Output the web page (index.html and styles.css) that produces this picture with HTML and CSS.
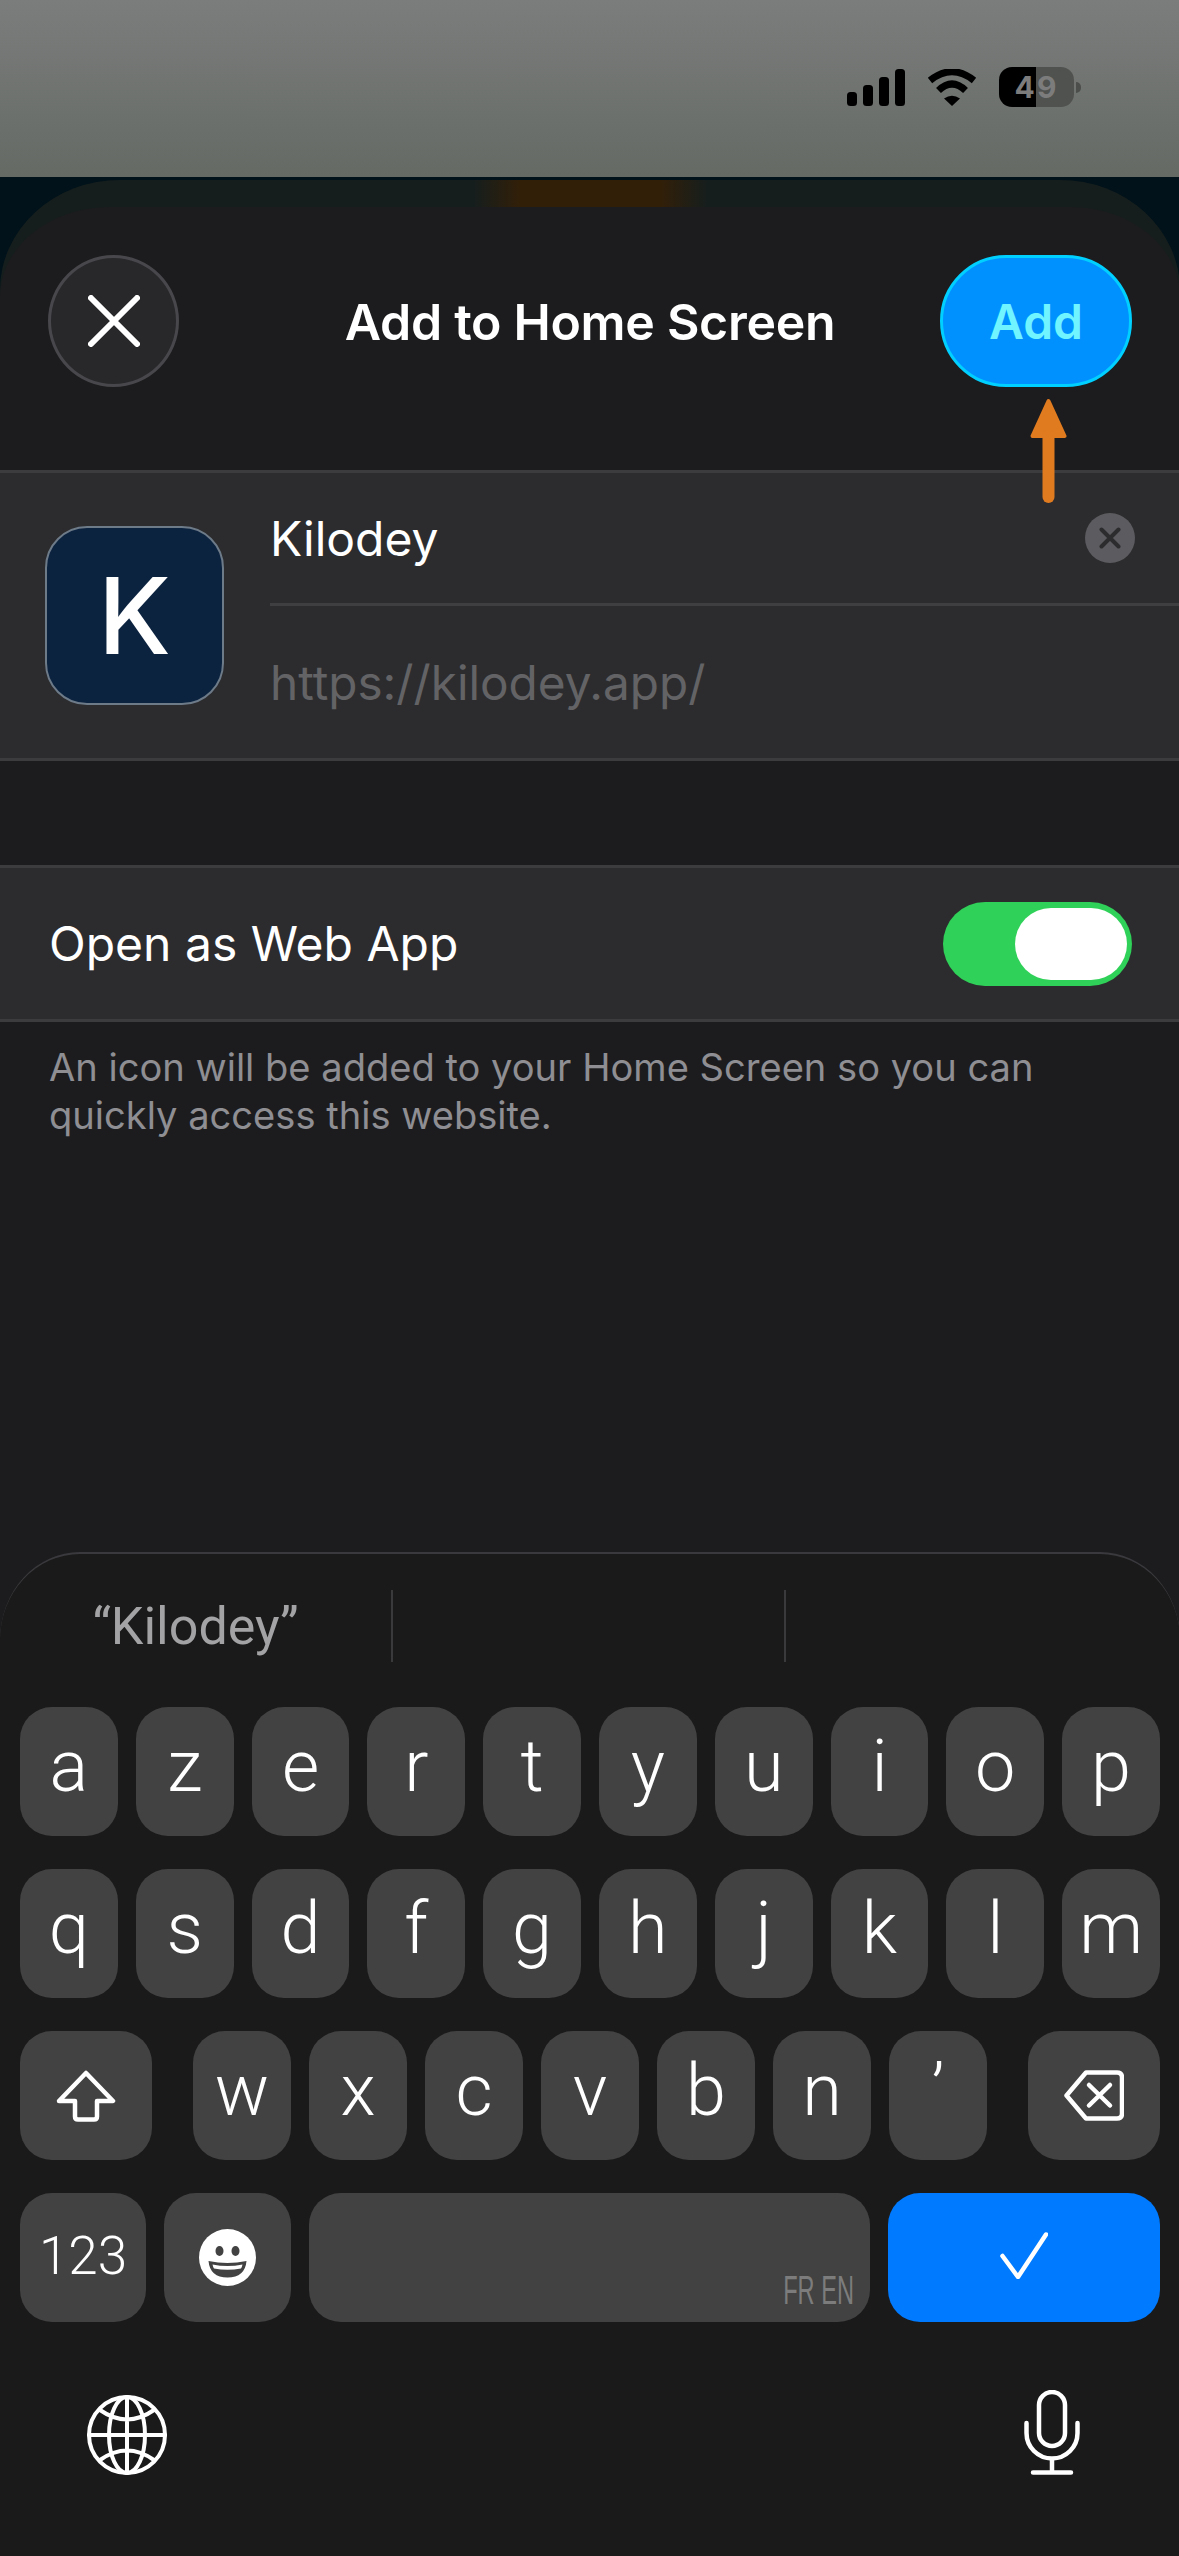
FILE: index.html
```html
<!DOCTYPE html>
<html lang="en">
<head>
<meta charset="utf-8">
<title>Add to Home Screen</title>
<link rel="stylesheet" href="styles.css">
</head>
<body>
<div class="screen">
  <header class="statusbar">
    <svg class="signal" viewBox="0 0 58 37" width="58" height="37"><rect x="0" y="23" width="10" height="14" rx="3.5"/><rect x="16" y="16" width="10" height="21" rx="3.5"/><rect x="32" y="8" width="10" height="29" rx="3.5"/><rect x="48" y="0" width="10" height="37" rx="3.5"/></svg>
    <svg class="wifi" viewBox="0 0 50 37" width="50" height="37"><path class="wifi-arc" d="M3 11.5Q25 -6 47 11.5"/><path class="wifi-arc" d="M11.5 21.5Q25 8.500 38.500 21.500"/><path d="M17 29.500Q25 24 33 29.500L25 37Z"/></svg>
    <div class="battery"><div class="battery-body">49</div><div class="battery-nub"></div></div>
  </header>
  <main class="backdrop">
    <div class="sheet-outer">
      <div class="glow"></div>
      <div class="sheet">
        <div class="nav">
          <button class="close" aria-label="Close"><svg viewBox="0 0 52 52" width="52" height="52"><path d="M3 3L49 49M49 3L3 49"/></svg></button>
          <h1 class="title">Add to Home Screen</h1>
          <button class="add">Add</button>
        </div>
        <section class="group app-row">
          <div class="app-icon">K</div>
          <div class="fields">
            <div class="field name-field"><span class="name">Kilodey</span><span class="clear"><svg viewBox="0 0 22 22" width="22" height="22"><path d="M2.500 2.500L19.500 19.500M19.500 2.500L2.500 19.500"/></svg></span></div>
            <div class="field url-field"><span class="url">https://kilodey.app/</span></div>
          </div>
        </section>
        <section class="group toggle-row">
          <span class="toggle-label">Open as Web App</span>
          <div class="toggle"><div class="knob"></div></div>
        </section>
        <p class="help">An icon will be added to your Home Screen so you can<br>quickly access this website.</p>
        <div class="keyboard">
          <div class="suggestions"><div class="cell">“Kilodey”</div><div class="cell"></div><div class="cell"></div></div>
          <div class="rows">
            <div class="row">
              <div class="key">a</div><div class="key">z</div><div class="key">e</div><div class="key">r</div><div class="key">t</div><div class="key">y</div><div class="key">u</div><div class="key">i</div><div class="key">o</div><div class="key">p</div>
            </div>
            <div class="row">
              <div class="key">q</div><div class="key">s</div><div class="key">d</div><div class="key">f</div><div class="key">g</div><div class="key">h</div><div class="key">j</div><div class="key">k</div><div class="key">l</div><div class="key">m</div>
            </div>
            <div class="row row-three">
              <div class="key side"><svg class="ico" viewBox="0 0 60 52" width="60" height="52"><path d="M30 3L57 31H41V46.500Q41 49.500 38 49.500H22Q19 49.500 19 46.500V31H3Z"/></svg></div>
              <div class="letters">
                <div class="key">w</div><div class="key">x</div><div class="key">c</div><div class="key">v</div><div class="key">b</div><div class="key">n</div><div class="key">’</div>
              </div>
              <div class="key side"><svg class="ico" viewBox="0 0 60 51" width="60" height="51"><path d="M22 2.500H53Q58 2.500 58 7.500V43.500Q58 48.500 53 48.500H22L2.500 25.500Z"/><path d="M25 15L46 35.500M46 15L25 35.500"/></svg></div>
            </div>
            <div class="row row-four">
              <div class="key num">123</div>
              <div class="key emoji"><svg viewBox="0 0 57 57" width="57" height="57"><circle class="face" cx="28.500" cy="28.500" r="28.500"/><ellipse class="feat" cx="20.500" cy="22" rx="4" ry="5"/><ellipse class="feat" cx="36.500" cy="22" rx="4" ry="5"/><path class="feat" d="M9.500 32Q28.500 36 47.500 32Q46 48.500 28.500 48.500Q11 48.500 9.500 32Z"/><path class="face" d="M13.500 35.500Q28.500 38.500 43.500 35.500Q43 38 42 39.500Q28.500 42 15 39.500Q14 38 13.500 35.500Z"/></svg></div>
              <div class="key space"><span class="lang">FR EN</span></div>
              <div class="key return"><svg class="ico" viewBox="0 0 48 47" width="48" height="47"><path d="M2.500 24L18 45L46 2.500"/></svg></div>
            </div>
          </div>
          <div class="bottom">
            <svg class="ico thin" viewBox="0 0 80 80" width="80" height="80"><circle cx="40" cy="40" r="38"/><ellipse cx="40" cy="40" rx="18" ry="38"/><path d="M40 2V78M2 40H78M13 15Q40 34 67 15M13 65Q40 46 67 65"/></svg>
            <svg class="ico" viewBox="0 0 56 85" width="56" height="85"><rect x="15" y="2" width="26" height="54" rx="13"/><path d="M2.500 33V43A25.500 25.500 0 0 0 53.500 43V33M28 69V82M9 82.500H47"/></svg>
          </div>
        </div>
      </div>
    </div>
  </main>
  <svg class="arrow" viewBox="0 0 37 105" width="37" height="105"><path class="arrow-head" d="M18.500 3L34.500 38H2.500Z"/><path class="arrow-shaft" d="M18.500 38V99"/></svg>
</div>
</body>
</html>
```
FILE: styles.css
```css
* { box-sizing: border-box; }
html, body { margin: 0; padding: 0; background: #1c1c1e; }
body { font-family: Inter, "Noto Sans", sans-serif; color: #fff; }
.screen {
  position: relative;
  width: 1179px;
  height: 2556px;
  overflow: hidden;
  display: flex;
  flex-direction: column;
}
.statusbar {
  height: 177px;
  flex: none;
  background: linear-gradient(180deg, #7b7d7c 0%, #656a65 100%);
  display: flex;
  align-items: center;
  padding: 67px 98px 70px 0;
  justify-content: flex-end;
  gap: 22px;
}
.signal { fill: #000; }
.wifi { fill: #000; }
.wifi-arc { fill: none; stroke: #000; stroke-width: 7; }
.battery { display: flex; align-items: center; gap: 2px; }
.battery-body {
  width: 75px;
  height: 40px;
  border-radius: 13px;
  background: linear-gradient(90deg, #000 0 49%, #505250 49% 100%);
  color: #7c7c7c;
  font-weight: 700;
  font-size: 30px;
  letter-spacing: 2px;
  line-height: 40px;
  text-align: center;
}
.battery-nub { width: 5px; height: 11px; border-radius: 0 6px 6px 0; background: #4c4e4c; }
.backdrop {
  flex: 1;
  min-height: 0;
  background: #01121a;
  padding-top: 3px;
  display: flex;
}
.sheet-outer {
  position: relative;
  flex: 1;
  background: #161e1d;
  border-radius: 120px 120px 0 0 / 110px 110px 0 0;
  padding-top: 27px;
  display: flex;
}
.glow {
  position: absolute;
  left: 474px;
  top: 0;
  width: 233px;
  height: 27px;
  background: linear-gradient(90deg, rgba(50,31,8,0) 0%, #321f08 20%, #321f08 80%, rgba(50,31,8,0) 100%);
}
.sheet {
  position: relative;
  flex: 1;
  background: #1c1c1e;
  border-radius: 110px 110px 0 0 / 90px 90px 0 0;
  display: flex;
  flex-direction: column;
}
.nav {
  height: 263px;
  flex: none;
  padding: 48px 48px 0;
  display: grid;
  grid-template-columns: 1fr auto 1fr;
  align-items: start;
}
.close {
  justify-self: start;
  width: 131px;
  height: 132px;
  padding: 0;
  border-radius: 50%;
  background: #28282b;
  border: 3px solid #48484c;
  display: flex;
  align-items: center;
  justify-content: center;
}
.close path { fill: none; stroke: #fff; stroke-width: 6; stroke-linecap: round; }
.title {
  margin: 0;
  padding-top: 1px;
  font-size: 50px;
  font-weight: 600;
  letter-spacing: -0.3px;
  line-height: 132px;
}
.add {
  justify-self: end;
  width: 192px;
  height: 132px;
  padding: 0;
  border-radius: 66px;
  background: #0091ff;
  border: 3px solid #00d0ff;
  color: #70f4ff;
  font: 600 48px Inter, sans-serif;
}
.group {
  flex: none;
  background: #2c2c2e;
  border-top: 3px solid #3c3c3f;
  border-bottom: 3px solid #3c3c3f;
}
.app-row {
  height: 291px;
  display: flex;
  align-items: center;
  padding-left: 45px;
}
.app-icon {
  width: 179px;
  height: 179px;
  flex: none;
  border-radius: 42px;
  background: #0c2340;
  border: 2px solid #6d7a88;
  display: flex;
  align-items: center;
  justify-content: center;
  font-size: 106px;
  font-weight: 500;
}
.fields { flex: 1; align-self: stretch; margin-left: 46px; display: flex; flex-direction: column; }
.field { display: flex; align-items: center; }
.name-field {
  height: 133px;
  flex: none;
  padding-right: 45px;
  justify-content: space-between;
  border-bottom: 3px solid #3f3f42;
}
.url-field { flex: 1; padding-top: 2px; }
.name { font-size: 48px; }
.url { font-size: 47.7px; color: #636366; }
.clear {
  width: 50px;
  height: 50px;
  border-radius: 50%;
  background: #5c5c60;
  display: flex;
  align-items: center;
  justify-content: center;
}
.clear path { fill: none; stroke: #2c2c2e; stroke-width: 4; stroke-linecap: round; }
.toggle-row {
  margin-top: 104px;
  height: 157px;
  display: flex;
  align-items: center;
  justify-content: space-between;
  padding: 0 48px 0 49px;
}
.toggle-label { font-size: 48px; }
.toggle {
  width: 189px;
  height: 84px;
  border-radius: 42px;
  background: #30d158;
  display: flex;
  align-items: center;
  justify-content: flex-end;
  padding-right: 5px;
}
.knob { width: 112px; height: 72px; border-radius: 36px; background: #fff; }
.help {
  margin: 0;
  padding: 21px 49px 0;
  font-size: 38.1px;
  line-height: 48px;
  color: #8e8e93;
}
.keyboard {
  margin-top: auto;
  height: 1004px;
  flex: none;
  background: #1a1a1a;
  border-top: 2px solid #3a3a3e;
  border-radius: 80px 80px 0 0 / 88px 88px 0 0;
  font-family: Roboto, sans-serif;
}
.suggestions {
  display: grid;
  grid-template-columns: 391px 393px 1fr;
  height: 72px;
  margin-top: 36px;
  margin-bottom: 45px;
  color: #a3a3a5;
  font-size: 52px;
}
.cell { display: flex; align-items: center; justify-content: center; }
.cell + .cell { border-left: 2px solid #3a3a3c; }
.rows { display: flex; flex-direction: column; gap: 33px; }
.row { display: flex; gap: 18px; padding: 0 20px; height: 129px; }
.letters { display: flex; gap: 18px; flex: 1; margin: 0 23px; }
.key {
  flex: 1;
  min-width: 0;
  background: #424242;
  border-radius: 32px;
  display: flex;
  align-items: center;
  justify-content: center;
  font-size: 72px;
  font-weight: 350;
  padding-bottom: 10px;
}
.side { flex: none; width: 132px; padding-bottom: 0; }
.row-four .key { flex: none; padding-bottom: 0; }
.row-four .num { width: 126px; font-size: 53px; font-weight: 350; padding-bottom: 3px; }
.emoji { width: 127px; }
.space { width: 561px; position: relative; }
.row-four .return { width: 272px; background: #007aff; padding-bottom: 4px; }
.lang {
  position: absolute;
  right: 16px;
  bottom: 17px;
  font: 400 40px/30px "Liberation Sans Narrow", "Liberation Sans", sans-serif;
  color: #7c7c7c;
  transform: scaleX(0.59);
  transform-origin: right center;
  white-space: nowrap;
}
.ico { fill: none; stroke: #fff; stroke-width: 4.5; stroke-linecap: round; stroke-linejoin: round; }
.thin { stroke-width: 4; }
.face { fill: #fff; }
.feat { fill: #424242; }
.bottom {
  display: flex;
  justify-content: space-between;
  align-items: flex-end;
  padding: 68px 100px 0 87px;
}
.arrow {
  position: absolute;
  left: 1030px;
  top: 398px;
}
.arrow-head { fill: #e07b20; stroke: #e07b20; stroke-width: 4; stroke-linejoin: round; }
.arrow-shaft { fill: none; stroke: #e07b20; stroke-width: 12; stroke-linecap: round; }
```
